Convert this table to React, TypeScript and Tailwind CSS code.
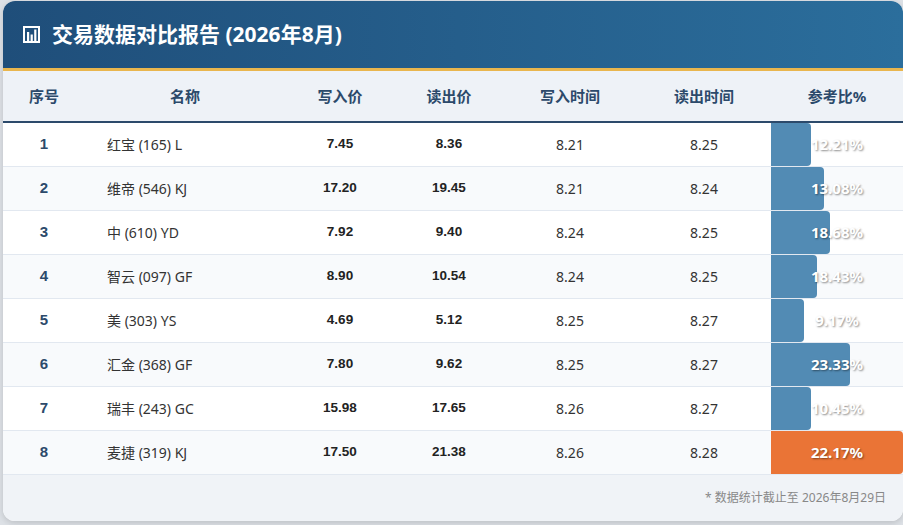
import React from "react";

interface Row {
  id: number;
  name: string;
  writePrice: string;
  readPrice: string;
  writeTime: string;
  readTime: string;
  ratio: string;
  barWidth: number;
  highlight?: boolean;
}

const rows: Row[] = [
  { id: 1, name: "红宝 (165) L", writePrice: "7.45", readPrice: "8.36", writeTime: "8.21", readTime: "8.25", ratio: "12.21%", barWidth: 40 },
  { id: 2, name: "维帝 (546) KJ", writePrice: "17.20", readPrice: "19.45", writeTime: "8.21", readTime: "8.24", ratio: "13.08%", barWidth: 53 },
  { id: 3, name: "中 (610) YD", writePrice: "7.92", readPrice: "9.40", writeTime: "8.24", readTime: "8.25", ratio: "18.68%", barWidth: 59 },
  { id: 4, name: "智云 (097) GF", writePrice: "8.90", readPrice: "10.54", writeTime: "8.24", readTime: "8.25", ratio: "18.43%", barWidth: 46 },
  { id: 5, name: "美 (303) YS", writePrice: "4.69", readPrice: "5.12", writeTime: "8.25", readTime: "8.27", ratio: "9.17%", barWidth: 33 },
  { id: 6, name: "汇金 (368) GF", writePrice: "7.80", readPrice: "9.62", writeTime: "8.25", readTime: "8.27", ratio: "23.33%", barWidth: 79 },
  { id: 7, name: "瑞丰 (243) GC", writePrice: "15.98", readPrice: "17.65", writeTime: "8.26", readTime: "8.27", ratio: "10.45%", barWidth: 40 },
  { id: 8, name: "麦捷 (319) KJ", writePrice: "17.50", readPrice: "21.38", writeTime: "8.26", readTime: "8.28", ratio: "22.17%", barWidth: 132, highlight: true },
];

const cols = "grid grid-cols-[82px_200px_110px_108px_134px_134px_132px]";
const arial = { fontFamily: '"Liberation Sans", Arial, sans-serif' };

function ChartIcon() {
  return (
    <svg width="17" height="17" viewBox="0 0 17 17" className="shrink-0">
      <path d="M1 1h15v15H1z" fill="none" stroke="#fff" strokeWidth="2" />
      <rect x="4" y="6" width="2.2" height="9" fill="#fff" />
      <rect x="7.6" y="8.5" width="2.2" height="6.5" fill="#fff" />
      <rect x="11.2" y="3.5" width="2.2" height="11.5" fill="#fff" />
    </svg>
  );
}

export default function App() {
  return (
    <div
      className="min-h-screen bg-[#dde1e6] pl-[3px] pt-[1px]"
      style={{ fontFamily: '"Noto Sans", "Noto Sans CJK SC", sans-serif' }}
    >
      <div className="w-[900px] overflow-hidden rounded-xl bg-white shadow-[0_2px_6px_rgba(0,0,0,0.15)]">
        {/* Header */}
        <div className="flex h-[70px] items-center gap-[12px] border-b-[3px] border-[#e9b64e] bg-gradient-to-r from-[#1f4e7a] to-[#2b6e9c] pl-[20px]">
          <ChartIcon />
          <h1 className="text-[21px] font-bold text-white">交易数据对比报告 (2026年8月)</h1>
        </div>

        {/* Column heads */}
        <div className={`${cols} h-[52px] items-center border-b-2 border-[#2c4a6b] bg-[#eef2f7] text-center text-[15px] font-bold text-[#2c4a6b]`}>
          <div>序号</div>
          <div>名称</div>
          <div>写入价</div>
          <div>读出价</div>
          <div>写入时间</div>
          <div>读出时间</div>
          <div>参考比%</div>
        </div>

        {/* Rows */}
        {rows.map((row, i) => (
          <div
            key={row.id}
            className={`${cols} h-[44px] items-stretch border-b border-[#e2e8f0] text-[14px] text-[#333] ${
              i % 2 === 1 ? "bg-[#f8fafc]" : "bg-white"
            }`}
          >
            <div className="flex items-center justify-center text-[15px] font-bold text-[#2c4a6b]" style={arial}>
              {row.id}
            </div>
            <div className="flex items-center pl-[22px]">{row.name}</div>
            <div className="flex items-center justify-center text-[13.5px] font-bold text-[#222]" style={arial}>
              {row.writePrice}
            </div>
            <div className="flex items-center justify-center text-[13.5px] font-bold text-[#222]" style={arial}>
              {row.readPrice}
            </div>
            <div className="flex items-center justify-center">{row.writeTime}</div>
            <div className="flex items-center justify-center">{row.readTime}</div>
            <div className="relative flex items-center justify-center">
              <div
                className={`absolute inset-y-0 left-0 rounded-r ${row.highlight ? "bg-[#ea7436]" : "bg-[#528bb4]"}`}
                style={{ width: row.barWidth }}
              />
              <span className="relative text-[15px] font-bold text-white [text-shadow:1px_1px_2px_rgba(0,0,0,0.45)]">
                {row.ratio}
              </span>
            </div>
          </div>
        ))}

        {/* Footer */}
        <div className="flex h-[46px] items-center justify-end bg-[#f0f3f7] pr-[17px] text-[12px] text-[#888]">
          * 数据统计截止至 2026年8月29日
        </div>
      </div>
    </div>
  );
}
